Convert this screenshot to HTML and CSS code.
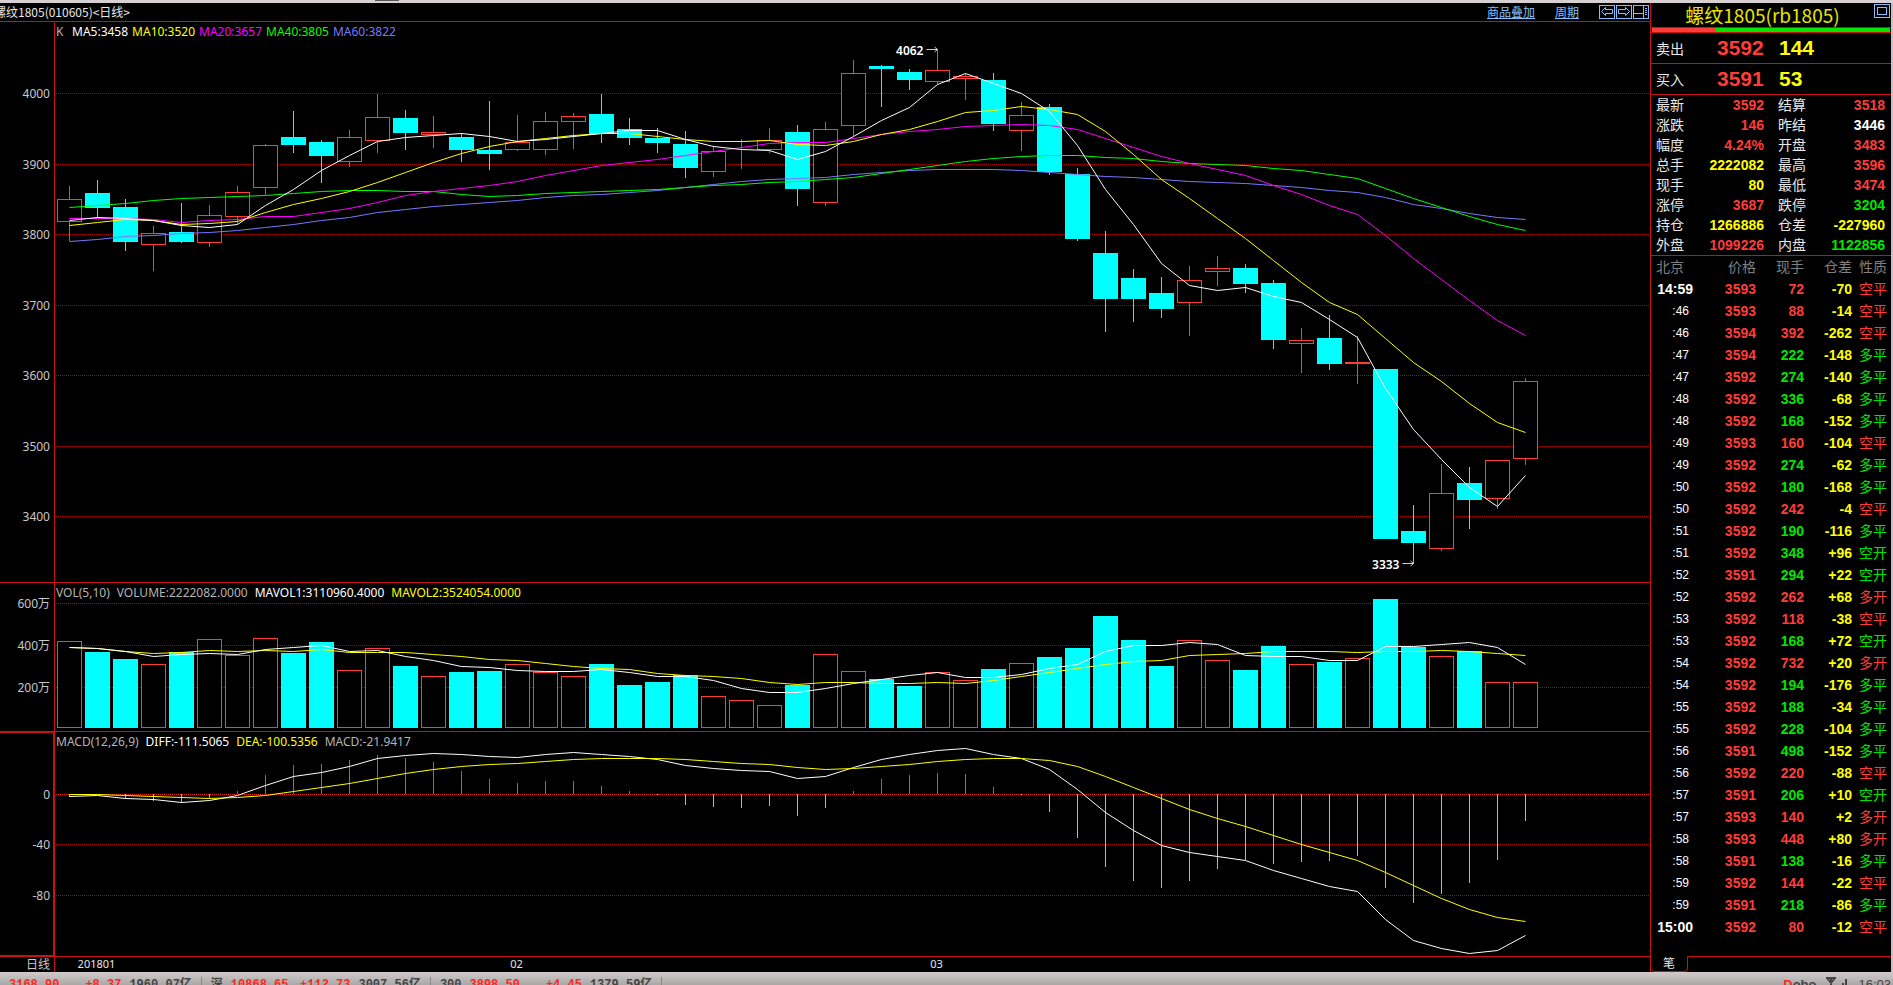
FILE: index.html
```html
<!DOCTYPE html>
<html lang="zh-CN">
<head>
    <meta charset="UTF-8">
    <meta name="viewport" content="width=device-width, initial-scale=1.0">
    <title>螺纹1805(rb1805)</title>
    <link rel="stylesheet" href="styles.css">
</head>
<body>
    <div class="top-strip"><span class="handle"></span></div>

    <div class="main">
        <section class="charts">
            <header class="chart-bar">
                <h1>螺纹1805(010605)&lt;日线&gt;</h1>
                <nav>
                    <a href="#overlay">商品叠加</a>
                    <a href="#period">周期</a>
                    <div class="tools">
                        <button aria-label="上一个"><svg width="17" height="14" viewBox="0 0 17 14"><rect x=".5" y=".5" width="15" height="13"/><path d="M2.500 6.500L6.500 2.500V4.500H13.500V8.500H6.500V10.500Z"/></svg></button>
                        <button aria-label="下一个"><svg width="17" height="14" viewBox="0 0 17 14"><rect x=".5" y=".5" width="15" height="13"/><path d="M13.500 6.500L9.500 2.500V4.500H2.500V8.500H9.500V10.500Z"/></svg></button>
                        <button aria-label="分栏"><svg width="16" height="14" viewBox="0 0 16 14"><rect x=".5" y=".5" width="15" height="13"/><path d="M10.500 1V13M1 8.500H10M12 3.500H14M12 5.500H14M12 7.500H14M12 9.500H14"/></svg></button>
                    </div>
                </nav>
            </header>

            <div class="panels">
                <div class="panel">
                    <svg id="price" role="img" aria-label="K线"></svg>
                    <div class="legend averages">
                        <span class="gray k">K</span>
                        <span class="white">MA5:3458</span>
                        <span class="yellow">MA10:3520</span>
                        <span class="magenta">MA20:3657</span>
                        <span class="lime">MA40:3805</span>
                        <span class="blue">MA60:3822</span>
                    </div>
                </div>
                <div class="panel">
                    <svg id="volume" role="img" aria-label="成交量"></svg>
                    <div class="legend">
                        <span class="gray">VOL(5,10)</span>
                        <span class="gray">VOLUME:2222082.0000</span>
                        <span class="white">MAVOL1:3110960.4000</span>
                        <span class="yellow">MAVOL2:3524054.0000</span>
                    </div>
                </div>
                <div class="panel">
                    <svg id="macd" role="img" aria-label="MACD"></svg>
                    <div class="legend">
                        <span class="gray">MACD(12,26,9)</span>
                        <span class="white">DIFF:-111.5065</span>
                        <span class="yellow">DEA:-100.5356</span>
                        <span class="gray">MACD:-21.9417</span>
                    </div>
                </div>
                <svg id="dates" class="dates"></svg>
            </div>
        </section>

        <aside class="quote">
            <header class="quote-bar">
                <h2>螺纹1805(rb1805)</h2>
                <button aria-label="窗口"><svg width="17" height="15" viewBox="0 0 17 15"><rect x=".5" y="1.500" width="15" height="13"/><rect x="3.500" y="4.500" width="9" height="7"/></svg></button>
            </header>
            <div class="ratio"><span class="buy"></span><span class="sell"></span></div>

            <div class="level"><span>卖出</span><b class="red">3592</b><b class="yellow">144</b></div>
            <div class="level"><span>买入</span><b class="red">3591</b><b class="yellow">53</b></div>

            <table class="stats">
                <tr><th>最新</th><td class="red">3592</td><th>结算</th><td class="red">3518</td></tr>
                <tr><th>涨跌</th><td class="red">146</td><th>昨结</th><td class="white">3446</td></tr>
                <tr><th>幅度</th><td class="red">4.24%</td><th>开盘</th><td class="red">3483</td></tr>
                <tr><th>总手</th><td class="yellow">2222082</td><th>最高</th><td class="red">3596</td></tr>
                <tr><th>现手</th><td class="yellow">80</td><th>最低</th><td class="red">3474</td></tr>
                <tr><th>涨停</th><td class="red">3687</td><th>跌停</th><td class="green">3204</td></tr>
                <tr><th>持仓</th><td class="yellow">1266886</td><th>仓差</th><td class="yellow">-227960</td></tr>
                <tr><th>外盘</th><td class="red">1099226</td><th>内盘</th><td class="green">1122856</td></tr>
            </table>

            <table class="ticks">
                <thead>
                    <tr><th>北京</th><th>价格</th><th>现手</th><th>仓差</th><th>性质</th></tr>
                </thead>
                <tbody id="ticks"></tbody>
            </table>

            <div class="tabs"><button>笔</button><span></span></div>
        </aside>
    </div>

    <footer class="status">
        <div class="index"><b class="red">3168.90</b><b class="red change">+8.37</b><b>1960.07亿</b></div>
        <div class="index"><b>深</b><b class="red">10868.65</b><b class="red change">+112.73</b><b>3007.56亿</b></div>
        <div class="index"><b>300</b><b class="red">3898.50</b><b class="red change">+4.45</b><b>1379.59亿</b></div>
        <div class="system">
            <b class="brand"><i>D</i>obo</b>
            <svg width="22" height="14" viewBox="0 0 22 14"><path d="M0 1H10M1 1L5 6L9 1M5 1V14M13 14V9M17 14V6M20 14V2" fill="none" stroke="#444" stroke-width="2"/></svg>
            <span>16:03</span>
        </div>
    </footer>

    <script src="chart.js"></script>
</body>
</html>
```
FILE: styles.css
```css
* { box-sizing: border-box; }
body { margin: 0; height: 100vh; display: flex; flex-direction: column; overflow: hidden; background: #000; color: #e8e8e8; font-family: "Noto Sans", "Noto Sans CJK SC", sans-serif; font-size: 12px; }
h1, h2 { margin: 0; font-weight: normal; }
button { padding: 0; border: 0; background: none; color: inherit; font: inherit; cursor: pointer; }
svg { display: block; }

.red { color: #ff3c38; }
.green { color: #00e600; }
.lime { color: #00ff00; }
.yellow { color: #ffff00; }
.white { color: #ffffff; }
.gray { color: #b4b4b4; }
.magenta { color: #ff00ff; }
.blue { color: #7878ff; }

.top-strip { flex: none; height: 3px; background: #d6d0d2; }
.handle { display: block; width: 24px; height: 1px; margin-left: 375px; background: #555; }
.main { flex: 1; min-height: 0; display: flex; border-right: 2px solid #c8c0c4; }

/* chart side */
.charts { flex: 1; min-width: 0; display: flex; flex-direction: column; }
.chart-bar { flex: none; height: 19px; display: flex; justify-content: space-between; border-bottom: 1px solid #c81408; line-height: 18px; }
.chart-bar h1 { margin-left: -6px; font-family: "Noto Sans CJK SC", sans-serif; font-size: 12px; line-height: 18px; white-space: nowrap; }
.chart-bar nav { display: flex; align-items: center; gap: 20px; padding-right: 1px; }
.chart-bar a { color: #80c0ff; font-family: "Noto Sans CJK SC", sans-serif; }
.tools { display: flex; }
.tools svg, .quote-bar svg { fill: none; stroke: #80c0ff; }

.panels { flex: 1; min-height: 0; display: grid; grid-template-rows: 561fr 149fr 225fr 15px; }
.panel { position: relative; min-height: 0; border-bottom: 1px solid #c81408; }
.panel svg { width: 100%; height: 100%; }
.legend { position: absolute; top: 0; left: 56px; display: flex; gap: 7px; line-height: 20px; white-space: nowrap; }
.averages { gap: 4px; }
.legend .k { width: 12px; }
.dates { width: 100%; height: 15px; }

.grid { stroke: #a00808; stroke-dasharray: 1 1; }
.zero { stroke: #e02010; stroke-dasharray: 1 1; }
.axis { stroke: #c81408; }
.up-body { fill: #000; stroke: #ff3c38; }
.down { fill: #00ffff; stroke: none; }
.line { fill: none; stroke-width: 1; }
.label { fill: #c8c8c8; font-size: 12px; text-anchor: end; }
.mark { fill: #ffffff; font-size: 12px; font-weight: 600; text-anchor: end; }
.arrow { fill: none; stroke: #d0d0d0; }
.date { fill: #e8e8e8; font-size: 11px; text-anchor: middle; }

/* quote side */
.quote { flex: none; width: 241px; display: flex; flex-direction: column; border-left: 1px solid #c81408; font-family: "Liberation Sans", "Noto Sans CJK SC", sans-serif; font-size: 14px; }
.quote-bar { flex: none; height: 25px; display: flex; align-items: flex-start; border-bottom: 1px solid #c81408; }
.quote-bar h2 { flex: 1; text-align: center; color: #e6e600; font-family: "Noto Sans CJK SC", sans-serif; font-size: 19px; line-height: 24px; }
.ratio { flex: none; display: flex; height: 5px; padding: 0 1px; border-bottom: 1px solid #c81408; }
.buy { flex: 27; background: #ff3c38; }
.sell { flex: 73; background: #00e600; }
.level { flex: none; height: 31px; display: grid; grid-template-columns: 61px 62px 1fr; align-items: center; padding-left: 5px; border-bottom: 1px solid #c81408; }
.level b { font-size: 21px; }

table { width: 100%; border-collapse: collapse; table-layout: fixed; }
th { padding: 0; font-weight: normal; text-align: left; }
td { padding: 0; font-weight: bold; text-align: right; }
.stats { border-bottom: 1px solid #c81408; line-height: 20px; }
.stats th { width: 43px; padding-left: 5px; }
.stats td:nth-child(2) { width: 70px; }
.stats th:nth-child(3) { width: 50px; padding-left: 14px; }
.stats td:nth-child(4) { padding-right: 6px; }

.ticks { line-height: 22px; }
.ticks th { color: #808080; text-align: right; }
.ticks th:nth-child(1) { width: 42px; padding-left: 5px; text-align: left; }
.ticks th:nth-child(2) { width: 63px; }
.ticks th:nth-child(3), .ticks th:nth-child(4) { width: 48px; }
.ticks th:nth-child(5), .ticks td:nth-child(5) { padding-right: 4px; }
.ticks td { height: 22px; }
.ticks td:nth-child(5) { font-weight: normal; }
.ticks .sec { padding-right: 4px; font-size: 12px; font-weight: normal; }

.tabs { flex: none; display: flex; height: 16px; margin-top: auto; }
.tabs button { width: 37px; border-bottom: 1px solid #c81408; border-right: 1px solid #c81408; border-radius: 0 0 4px 4px; font-size: 12px; line-height: 14px; }
.tabs span { flex: 1; border-top: 1px solid #c81408; }

/* status bar */
.status { flex: none; display: flex; height: 13px; overflow: hidden; padding-top: 5px; background: linear-gradient(#d2caca, #a8a8a8); color: #444; font-family: "Liberation Mono", "Noto Sans CJK SC", monospace; font-size: 12px; line-height: 16px; white-space: nowrap; }
.status .red { color: #ff2820; }
.index { display: flex; gap: 8px; height: 16px; padding: 0 9px; border-right: 1px solid #888; }
.change { width: 54px; text-align: right; }
.system { display: flex; gap: 10px; margin-left: auto; padding-right: 2px; font-family: "Liberation Sans", sans-serif; font-size: 13px; }
.brand i { color: #ff2820; font-style: normal; }
```
FILE: chart.js
```js
const NS = 'http://www.w3.org/2000/svg';
const LEFT = 57;    // x of the first candle
const STEP = 28;    // distance between candles
const BAR = 25;     // candle width
const AXIS = 54;

// direction, high, body top, body bottom, low
const candles = [
    ['u', 186, 199, 222, 241], ['d', 180, 193, 208, 218], ['d', 199, 207, 242, 251], ['u', 226, 233, 245, 271],
    ['d', 203, 232, 242, 243], ['u', 205, 215, 243, 247], ['u', 186, 192, 217, 224], ['u', 144, 145, 188, 195],
    ['d', 111, 137, 145, 153], ['d', 140, 142, 156, 183], ['u', 130, 137, 162, 167], ['u', 94, 117, 141, 153],
    ['d', 110, 118, 133, 150], ['u', 116, 132, 135, 148], ['d', 133, 137, 150, 162], ['d', 101, 150, 154, 170],
    ['u', 115, 142, 150, 151], ['u', 112, 121, 150, 155], ['u', 113, 116, 122, 149], ['d', 94, 114, 134, 143],
    ['d', 118, 129, 138, 145], ['d', 128, 138, 143, 153], ['d', 131, 144, 168, 178], ['u', 146, 151, 172, 177],
    ['u', 139, 149, 150, 169], ['u', 128, 140, 150, 153], ['d', 125, 132, 189, 206], ['u', 122, 129, 203, 206],
    ['u', 60, 73, 126, 136], ['d', 65, 66, 69, 107], ['d', 69, 72, 80, 90], ['u', 49, 70, 82, 84],
    ['u', 74, 76, 79, 100], ['d', 73, 80, 124, 131], ['u', 102, 115, 131, 151], ['d', 104, 107, 172, 175],
    ['d', 168, 174, 239, 241], ['d', 231, 253, 299, 332], ['d', 269, 278, 299, 322], ['d', 277, 293, 309, 318],
    ['u', 266, 280, 303, 336], ['u', 256, 268, 272, 286], ['d', 264, 268, 284, 293], ['d', 280, 283, 340, 349],
    ['u', 328, 340, 344, 373], ['d', 315, 338, 364, 370], ['u', 336, 362, 364, 384], ['d', 369, 369, 539, 539],
    ['d', 505, 531, 543, 564], ['u', 464, 493, 549, 551], ['d', 467, 483, 500, 529], ['u', 460, 460, 499, 509],
    ['u', 378, 381, 459, 465]
];

const ma5 = [220, 217, 218, 220, 225, 227, 224, 205, 189, 170, 155, 141, 137, 135, 133, 136, 141, 139, 136, 133, 130, 130, 139, 146, 149, 150, 159, 151, 136, 120, 107, 84, 73, 83, 93, 111, 145, 189, 224, 263, 285, 290, 287, 296, 302, 319, 337, 388, 429, 459, 487, 506, 475];
const ma10 = [225, 222, 219, 220, 224, 223, 221, 212, 204, 198, 191, 182, 172, 162, 153, 146, 141, 138, 135, 133, 133, 136, 139, 141, 141, 140, 144, 145, 141, 134, 129, 121, 112, 110, 106, 109, 114, 131, 154, 179, 198, 218, 238, 260, 282, 302, 314, 338, 362, 381, 403, 422, 432];
const ma20 = [218, 218, 218, 219, 222, 220, 219, 216, 216, 212, 208, 202, 195, 191, 188, 185, 181, 175, 170, 165, 162, 159, 155, 151, 147, 143, 142, 142, 138, 134, 131, 129, 126, 125, 124, 125, 129, 138, 147, 156, 163, 169, 175, 185, 194, 205, 214, 235, 258, 279, 300, 320, 335];
const ma40 = [207, 205, 203, 200, 198, 197, 196, 195, 193, 191, 190, 190, 191, 191, 194, 196, 195, 193, 192, 191, 190, 189, 187, 185, 184, 182, 181, 179, 177, 173, 169, 165, 161, 158, 156, 155, 155, 157, 158, 161, 163, 164, 165, 168, 170, 174, 178, 188, 198, 207, 216, 224, 230];
const ma60 = [241, 239, 236, 235, 233, 232, 230, 227, 224, 220, 217, 212, 209, 206, 204, 202, 200, 197, 195, 194, 192, 190, 187, 184, 181, 179, 178, 177, 174, 172, 170, 169, 169, 169, 170, 172, 174, 176, 177, 179, 181, 182, 183, 185, 187, 190, 192, 197, 204, 208, 213, 217, 219];

const volume = [641, 652, 659, 664, 652, 639, 655, 638, 653, 642, 670, 648, 666, 676, 672, 671, 664, 672, 676, 664, 685, 682, 675, 696, 700, 705, 685, 654, 671, 679, 686, 672, 680, 669, 663, 657, 648, 616, 640, 666, 640, 660, 670, 646, 664, 662, 658, 599, 647, 656, 651, 682, 682];
const mavol1 = [647, 648, 651, 656, 654, 653, 654, 649, 647, 645, 651, 650, 656, 660, 666, 667, 670, 671, 671, 669, 672, 676, 676, 680, 688, 692, 692, 688, 683, 679, 675, 672, 677, 677, 674, 668, 664, 651, 645, 645, 642, 644, 655, 656, 656, 660, 660, 646, 646, 644, 642, 647, 664];
const mavol2 = [647, 648, 651, 653, 652, 650, 651, 650, 651, 649, 652, 652, 652, 654, 656, 659, 660, 663, 666, 668, 669, 673, 675, 676, 678, 682, 684, 682, 682, 683, 683, 682, 683, 680, 676, 672, 668, 664, 661, 660, 655, 654, 653, 651, 651, 651, 652, 651, 651, 650, 651, 653, 655];

const macd = [797, 794, 799, 801, 803, 798, 791, 775, 765, 764, 760, 755, 758, 762, 771, 779, 783, 781, 781, 786, 791, 795, 805, 807, 808, 806, 816, 808, 791, 779, 775, 773, 774, 787, 795, 812, 838, 867, 881, 888, 881, 869, 860, 864, 862, 861, 856, 888, 903, 894, 883, 860, 821];
const diff = [796, 795, 798, 799, 802, 800, 795, 785, 776, 772, 766, 758, 755, 753, 754, 756, 757, 754, 752, 754, 756, 759, 765, 768, 770, 771, 778, 776, 767, 759, 754, 750, 748, 754, 758, 769, 789, 812, 830, 845, 852, 856, 860, 870, 878, 886, 891, 919, 940, 948, 953, 950, 935];
const dea = [794, 794, 795, 796, 797, 798, 797, 795, 791, 787, 783, 778, 773, 769, 766, 764, 763, 761, 759, 758, 758, 758, 759, 761, 763, 764, 767, 769, 768, 766, 764, 761, 759, 758, 758, 760, 766, 776, 787, 798, 809, 818, 826, 835, 844, 852, 860, 872, 885, 898, 909, 917, 921];

const ticks = [
    ['14:59', 3593, 72, '-70', '空平', 'red'], [':46', 3593, 88, '-14', '空平', 'red'], [':46', 3594, 392, '-262', '空平', 'red'],
    [':47', 3594, 222, '-148', '多平', 'green'], [':47', 3592, 274, '-140', '多平', 'green'], [':48', 3592, 336, '-68', '多平', 'green'],
    [':48', 3592, 168, '-152', '多平', 'green'], [':49', 3593, 160, '-104', '空平', 'red'], [':49', 3592, 274, '-62', '多平', 'green'],
    [':50', 3592, 180, '-168', '多平', 'green'], [':50', 3592, 242, '-4', '空平', 'red'], [':51', 3592, 190, '-116', '多平', 'green'],
    [':51', 3592, 348, '+96', '空开', 'green'], [':52', 3591, 294, '+22', '空开', 'green'], [':52', 3592, 262, '+68', '多开', 'red'],
    [':53', 3592, 118, '-38', '空平', 'red'], [':53', 3592, 168, '+72', '空开', 'green'], [':54', 3592, 732, '+20', '多开', 'red'],
    [':54', 3592, 194, '-176', '多平', 'green'], [':55', 3592, 188, '-34', '多平', 'green'], [':55', 3592, 228, '-104', '多平', 'green'],
    [':56', 3591, 498, '-152', '多平', 'green'], [':56', 3592, 220, '-88', '空平', 'red'], [':57', 3591, 206, '+10', '空开', 'green'],
    [':57', 3593, 140, '+2', '多开', 'red'], [':58', 3593, 448, '+80', '多开', 'red'], [':58', 3591, 138, '-16', '多平', 'green'],
    [':59', 3592, 144, '-22', '空平', 'red'], [':59', 3591, 218, '-86', '多平', 'green'], ['15:00', 3592, 80, '-12', '空平', 'red']
];

function add(svg, tag, attrs, text) {
    const el = document.createElementNS(NS, tag);
    for (const key in attrs) el.setAttribute(key, attrs[key]);
    if (text) el.textContent = text;
    svg.appendChild(el);
}

function center(i) {
    return LEFT + i * STEP + 12.5;
}

// Clears a panel, draws its grid and returns the vertical scale
function panel(id, top, bottom, levels) {
    const svg = document.getElementById(id);
    const box = svg.getBoundingClientRect();
    svg.innerHTML = '';
    const y = v => Math.round((v - top) * box.height / (bottom - top));
    add(svg, 'path', { class: 'axis', d: `M${AXIS + 0.5} 0V${box.height}` });
    levels.forEach(([v, name]) => {
        add(svg, 'path', { class: name === '0' ? 'zero' : 'grid', d: `M${AXIS + 2} ${y(v) + 0.5}H${box.width}` });
        add(svg, 'text', { class: 'label', x: 50, y: y(v) + 5 }, name);
    });
    return { svg, y };
}

function line({ svg, y }, values, color) {
    const points = values.map((v, i) => `${center(i)},${y(v) + 0.5}`).join(' ');
    add(svg, 'polyline', { class: 'line', stroke: color, points });
}

function bar({ svg, y }, i, dir, top, bottom) {
    const x = LEFT + i * STEP;
    const h = y(bottom) - y(top);
    if (dir === 'u') {
        add(svg, 'rect', { class: 'up-body', x: x + 0.5, y: y(top) + 0.5, width: BAR - 1, height: Math.max(h - 1, 0) });
    } else {
        add(svg, 'rect', { class: 'down', x, y: y(top), width: BAR, height: h });
    }
}

function stem({ svg, y }, i, color, from, to) {
    add(svg, 'path', { stroke: color, d: `M${center(i)} ${y(from)}V${y(to)}` });
}

function drawPrice() {
    const p = panel('price', 22, 582, [[93, '4000'], [164, '3900'], [234, '3800'], [305, '3700'], [375, '3600'], [446, '3500'], [516, '3400']]);
    candles.forEach(([dir, high, top, bottom, low], i) => {
        stem(p, i, dir === 'u' ? '#ff3c38' : '#00ffff', high, low);
        bar(p, i, dir, top, bottom);
    });
    line(p, ma60, '#7878ff');
    line(p, ma40, '#00ff00');
    line(p, ma20, '#ff00ff');
    line(p, ma10, '#ffff00');
    line(p, ma5, '#ffffff');
    [[31, 49, '4062'], [48, 563, '3333']].forEach(([i, v, text]) => {
        const x = center(i);
        const y = p.y(v) + 0.5;
        add(p.svg, 'text', { class: 'mark', x: x - 14, y: y + 5 }, text);
        add(p.svg, 'path', { class: 'arrow', d: `M${x - 11} ${y}H${x}M${x - 3} ${y - 2.5}L${x} ${y}L${x - 3} ${y + 2.5}` });
    });
}

function drawVolume() {
    const p = panel('volume', 583, 731, [[603, '600万'], [645, '400万'], [687, '200万']]);
    volume.forEach((v, i) => bar(p, i, candles[i][0], v, 728));
    line(p, mavol2, '#ffff00');
    line(p, mavol1, '#ffffff');
}

function drawMacd() {
    const p = panel('macd', 732, 956, [[794, '0'], [844, '-40'], [895, '-80']]);
    const bottom = p.y(956);
    add(p.svg, 'path', { class: 'axis', d: `M0 0.5H${AXIS}M${AXIS - 0.5} 0V${bottom}M0 ${bottom - 0.5}H${AXIS}` });
    macd.forEach((v, i) => stem(p, i, v < 794 ? '#ff3c38' : '#00ffff', 794, v));
    line(p, diff, '#ffffff');
    line(p, dea, '#ffff00');
}

function drawDates() {
    const svg = document.getElementById('dates');
    svg.innerHTML = '';
    add(svg, 'path', { class: 'axis', d: `M${AXIS + 0.5} 0V15` });
    add(svg, 'text', { class: 'label', x: 50, y: 12 }, '日线');
    [[1, '201801'], [16, '02'], [31, '03']].forEach(([i, text]) => {
        add(svg, 'text', { class: 'date', x: center(i) - 1, y: 11 }, text);
    });
}

function draw() {
    drawPrice();
    drawVolume();
    drawMacd();
    drawDates();
}

document.getElementById('ticks').innerHTML = ticks.map(([time, price, qty, change, kind, color]) => `
    <tr>
        <td class="white${time[0] === ':' ? ' sec' : ''}">${time}</td>
        <td class="red">${price}</td>
        <td class="${color}">${qty}</td>
        <td class="yellow">${change}</td>
        <td class="${color}">${kind}</td>
    </tr>`).join('');

draw();
window.addEventListener('resize', draw);
```
